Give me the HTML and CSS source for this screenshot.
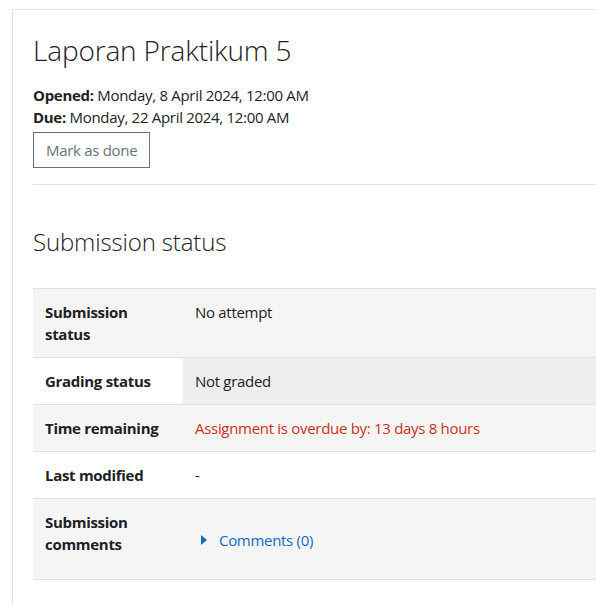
FILE: index.html
```html
<!DOCTYPE html>
<html lang="en">
<head>
<meta charset="utf-8">
<title>Laporan Praktikum 5</title>
<link rel="stylesheet" href="styles.css">
</head>
<body>
<div class="card">
  <h2 class="title">Laporan Praktikum 5</h2>
  <div class="dates">
    <div><strong>Opened:</strong> Monday, 8 April 2024, 12:00 AM</div>
    <div><strong>Due:</strong> Monday, 22 April 2024, 12:00 AM</div>
  </div>
  <button class="btn" type="button">Mark as done</button>
  <hr class="sep">
  <h3 class="subtitle">Submission status</h3>
  <table class="status">
    <tbody>
      <tr class="odd">
        <th>Submission<br>status</th>
        <td>No attempt</td>
      </tr>
      <tr class="even">
        <th>Grading status</th>
        <td class="hl">Not graded</td>
      </tr>
      <tr class="odd">
        <th>Time remaining</th>
        <td class="overdue">Assignment is overdue by: 13 days 8 hours</td>
      </tr>
      <tr class="even">
        <th>Last modified</th>
        <td>-</td>
      </tr>
      <tr class="odd">
        <th>Submission<br>comments</th>
        <td>
          <div class="comments">
            <svg class="caret" width="6" height="10" viewBox="0 0 6 10"><path d="M0 0 L6 5 L0 10 Z" fill="#0f6cbf"/></svg>
            <a href="#" class="link">Comments (0)</a>
          </div>
        </td>
      </tr>
    </tbody>
  </table>
</div>
</body>
</html>
```
FILE: styles.css
```css
html, body {
  margin: 0;
  padding: 0;
  background: #fff;
}
body {
  font-family: "Open Sans", "Noto Sans", sans-serif;
  font-size: 15px;
  line-height: 22px;
  letter-spacing: -0.3px;
  color: #1d2125;
  overflow: hidden;
}
.card {
  margin: 9px 0 0 12px;
  width: 620px;
  min-height: 620px;
  border-top: 1px solid #dee2e6;
  border-left: 1px solid #dee2e6;
  padding: 22px 0 0 20px;
  box-sizing: border-box;
}
.title {
  margin: 0 0 16px 0;
  font-size: 28px;
  font-weight: 300;
  line-height: 36px;
  letter-spacing: -0.15px;
}
.dates strong {
  font-weight: 700;
}
.btn {
  margin-top: 4px;
  font-family: inherit;
  font-size: 15px;
  line-height: 22px;
  letter-spacing: -0.3px;
  color: #6a737b;
  background: #fff;
  border: 1px solid #6a737b;
  padding: 6px 12px;
  border-radius: 0;
}
.sep {
  margin: 16px 0 0 0;
  border: 0;
  border-top: 1px solid #dee2e6;
}
.subtitle {
  margin: 41px 0 31px 0;
  font-size: 24px;
  font-weight: 300;
  line-height: 31px;
  letter-spacing: -0.15px;
}
.status {
  width: 563px;
  border-collapse: collapse;
  border-top: 1px solid #dee2e6;
}
.status th, .status td {
  text-align: left;
  vertical-align: top;
  padding: 12px;
  border-bottom: 1px solid #dee2e6;
}
.status th {
  width: 126px;
  font-weight: 700;
}
.status tr.odd {
  background: #f5f5f5;
}
.status td.hl {
  background: #eeeeee;
}
.overdue {
  color: #ca3120;
}
.comments {
  display: flex;
  align-items: center;
  gap: 12px;
  padding: 18px 0 16px 6px;
}
.link {
  color: #0f6cbf;
  text-decoration: none;
}
```
